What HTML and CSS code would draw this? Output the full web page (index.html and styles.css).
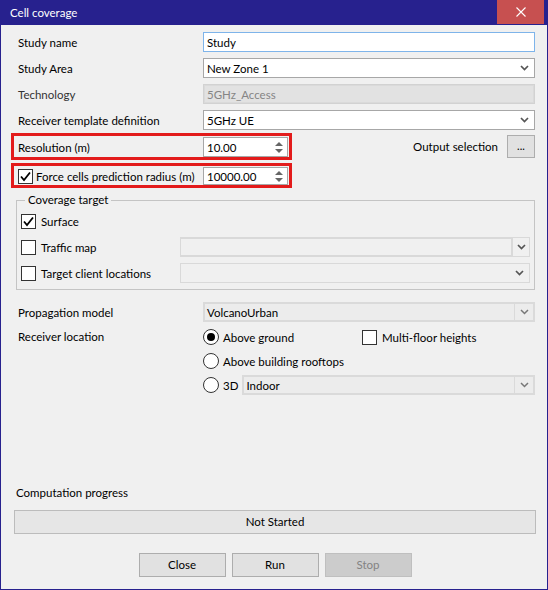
FILE: index.html
```html
<!DOCTYPE html>
<html lang="en">
    <head>
        <meta charset="UTF-8">
        <meta name="viewport" content="width=device-width, initial-scale=1.0">
        <title>Cell coverage</title>

        <link rel="stylesheet" href="styles.css">
    </head>
    <body>
        <div class="window">

            <div class="titlebar">
                <span class="title">Cell coverage</span>
                <span class="close-btn">
                    <svg width="10" height="10" viewBox="0 0 10 10"><path d="M0.5 0.5L9.5 9.5M9.5 0.5L0.5 9.5" stroke="#fff" stroke-width="1.1"/></svg>
                </span>
            </div>

            <div class="client">

                <div class="row">
                    <span class="lbl">Study name</span>
                    <div class="field focus">Study</div>
                </div>

                <div class="row">
                    <span class="lbl">Study Area</span>
                    <div class="field">
                        <span class="val">New Zone 1</span>
                        <svg class="chev" width="9" height="6" viewBox="0 0 9 6"><path d="M1 1l3.5 3.5L8 1" fill="none" stroke="#555" stroke-width="1.7"/></svg>
                    </div>
                </div>

                <div class="row">
                    <span class="lbl lbl-dim">Technology</span>
                    <div class="field disabled">5GHz_Access</div>
                </div>

                <div class="row">
                    <span class="lbl">Receiver template definition</span>
                    <div class="field">
                        <span class="val">5GHz UE</span>
                        <svg class="chev" width="9" height="6" viewBox="0 0 9 6"><path d="M1 1l3.5 3.5L8 1" fill="none" stroke="#555" stroke-width="1.7"/></svg>
                    </div>
                </div>

                <!-- linhas destacadas em vermelho -->
                <div class="hl-row">
                    <div class="redbox">
                        <span class="lbl">Resolution (m)</span>
                        <div class="spin">
                            <span class="val">10.00</span>
                            <svg class="arrows" width="8" height="13" viewBox="0 0 8 13"><path d="M0 5L4 1L8 5Z M0 8L4 12L8 8Z" fill="#666"/></svg>
                        </div>
                    </div>
                    <span class="out-lbl">Output selection</span>
                    <span class="dots-btn">...</span>
                </div>

                <div class="hl-row second">
                    <div class="redbox">
                        <span class="lbl chk-lbl">
                            <span class="chk">
                                <svg width="13" height="13" viewBox="0 0 13 13"><path d="M2 6.5L5 10L11 2.5" fill="none" stroke="#000" stroke-width="1.8"/></svg>
                            </span>
                            Force cells prediction radius (m)
                        </span>
                        <div class="spin short">
                            <span class="val">10000.00</span>
                            <svg class="arrows" width="8" height="13" viewBox="0 0 8 13"><path d="M0 5L4 1L8 5Z M0 8L4 12L8 8Z" fill="#666"/></svg>
                        </div>
                    </div>
                </div>

                <fieldset class="group">
                    <legend>Coverage target</legend>

                    <div class="grow">
                        <span class="chk">
                            <svg width="13" height="13" viewBox="0 0 13 13"><path d="M2 6.5L5 10L11 2.5" fill="none" stroke="#000" stroke-width="1.8"/></svg>
                        </span>
                        <span>Surface</span>
                    </div>

                    <div class="grow">
                        <span class="chk"></span>
                        <span class="grow-lbl">Traffic map</span>
                        <div class="combo-split">
                            <div class="cs-text"></div>
                            <div class="cs-btn">
                                <svg width="9" height="6" viewBox="0 0 9 6"><path d="M1 1l3.5 3.5L8 1" fill="none" stroke="#555" stroke-width="1.7"/></svg>
                            </div>
                        </div>
                    </div>

                    <div class="grow last">
                        <span class="chk"></span>
                        <span class="grow-lbl">Target client locations</span>
                        <div class="combo-off">
                            <svg class="chev" width="9" height="6" viewBox="0 0 9 6"><path d="M1 1l3.5 3.5L8 1" fill="none" stroke="#555" stroke-width="1.7"/></svg>
                        </div>
                    </div>
                </fieldset>

                <div class="row prop">
                    <span class="lbl">Propagation model</span>
                    <div class="field flat">
                        <span class="val">VolcanoUrban</span>
                        <span class="sep"></span>
                        <svg class="chev" width="9" height="6" viewBox="0 0 9 6"><path d="M1 1l3.5 3.5L8 1" fill="none" stroke="#777" stroke-width="1.5"/></svg>
                    </div>
                </div>

                <div class="receiver">
                    <span class="lbl rec-lbl">Receiver location</span>
                    <div class="radios">
                        <div class="rrow">
                            <span class="opt">
                                <span class="radio on"></span>
                                Above ground
                            </span>
                            <span class="chk"></span>
                            <span class="mf-lbl">Multi-floor heights</span>
                        </div>
                        <div class="rrow">
                            <span class="radio"></span>
                            Above building rooftops
                        </div>
                        <div class="rrow">
                            <span class="radio"></span>
                            <span class="d3">3D</span>
                            <div class="field flat">
                                <span class="val">Indoor</span>
                                <span class="sep"></span>
                                <svg class="chev" width="9" height="6" viewBox="0 0 9 6"><path d="M1 1l3.5 3.5L8 1" fill="none" stroke="#777" stroke-width="1.5"/></svg>
                            </div>
                        </div>
                    </div>
                </div>

                <div class="spacer"></div>

                <div class="progress-lbl">Computation progress</div>
                <div class="progress">Not Started</div>

                <div class="buttons">
                    <span class="btn">Close</span>
                    <span class="btn">Run</span>
                    <span class="btn off">Stop</span>
                </div>

            </div>
        </div>
    </body>
</html>
```

FILE: styles.css
```css
*{
    box-sizing: border-box;
}

body{
    margin: 0;
    font-family: Lato, "Liberation Sans", sans-serif;
    font-size: 11.5px;
    color: #000;
}

.window{
    width: 548px;
    height: 590px;
    background-color: #f0f0f0;
    display: flex;
    flex-direction: column;
}

.titlebar{
    height: 25px;
    background-color: #27218e;
    color: #fff;
    display: flex;
    align-items: flex-start;
    padding-left: 10px;
}
.title{
    flex: 1;
    line-height: 25px;
}
.close-btn{
    width: 47px;
    height: 24px;
    margin-right: 4px;
    background-color: #c75050;
    display: flex;
    align-items: center;
    justify-content: center;
}

.client{
    flex: 1;
    border: 1px solid #27218e;
    border-top: 0;
    display: flex;
    flex-direction: column;
    padding: 7px 11px 12px 13px;
}

.row{
    display: flex;
    align-items: center;
    height: 20px;
    padding: 0 1px 0 4px;
    margin-bottom: 6px;
}
.lbl{
    width: 185px;
    flex-shrink: 0;
}
.lbl-dim{
    color: #333;
}

.field{
    flex: 1;
    height: 20px;
    border: 1px solid #a7a7a7;
    background-color: #fff;
    display: flex;
    align-items: center;
    padding: 0 5px 0 3px;
}
.field .val{
    flex: 1;
}
.field.focus{
    border-color: #7eb4ea;
}
.field.disabled{
    background-color: #e2e2e2;
    border: 1px solid #d2d2d2;
    box-shadow: inset 0 0 0 1px #dadada;
    color: #858585;
}
.field.flat{
    background-color: #ececec;
    border: 2px solid #dadada;
    padding-left: 2px;
    padding-right: 4px;
}
.sep{
    width: 1px;
    height: 16px;
    background-color: #dadada;
    margin-right: 5px;
}

/* linhas com caixa vermelha */
.hl-row{
    display: flex;
    align-items: center;
    margin-left: -3px;
    margin-top: -3px;
}
.hl-row.second{
    margin-top: 3px;
}
.redbox{
    display: flex;
    align-items: center;
    border: 3px solid #e31b1b;
    padding: 1px 1px 0 4px;
}
.spin{
    width: 85px;
    height: 20px;
    border: 1px solid #a7a7a7;
    background-color: #fff;
    display: flex;
    align-items: center;
    padding: 0 4px 0 3px;
}
.spin.short{
    height: 18px;
}
.spin .val{
    flex: 1;
}
.chk-lbl{
    display: flex;
    align-items: center;
}
.chk-lbl .chk{
    margin-right: 3px;
}
.out-lbl{
    margin-left: auto;
    margin-right: 9px;
}
.dots-btn{
    width: 28px;
    height: 23px;
    margin-right: 1px;
    border: 1px solid #adadad;
    background-color: #e1e1e1;
    text-align: center;
    line-height: 20px;
    font-size: 11px;
}

.chk{
    width: 15px;
    height: 15px;
    border: 1px solid #333;
    background-color: #fff;
    display: inline-flex;
    align-items: center;
    justify-content: center;
    flex-shrink: 0;
}

.group{
    margin: 4px 1px 0 2px;
    border: 1px solid #c4c4c4;
    padding: 3px 4px 6px 4px;
    min-width: 0;
}
.group legend{
    line-height: 16px;
    padding: 0 3px;
    margin-left: 4px;
}
.grow{
    display: flex;
    align-items: center;
    height: 20px;
    margin-bottom: 6px;
}
.grow.last{
    margin-top: 1px;
    margin-bottom: 0;
}
.grow .chk{
    margin-right: 5px;
}
.grow-lbl{
    width: 139px;
}
.combo-split{
    flex: 1;
    height: 20px;
    display: flex;
}
.cs-text{
    flex: 1;
    border: 1px solid #d9d9d9;
    border-width: 2px 1px;
}
.cs-btn{
    width: 18px;
    border: 1px solid #d9d9d9;
    display: flex;
    align-items: center;
    justify-content: center;
}
.combo-off{
    flex: 1;
    height: 20px;
    border: 1px solid #d9d9d9;
    display: flex;
    align-items: center;
    justify-content: flex-end;
    padding-right: 5px;
}

.row.prop{
    margin-top: 12px;
    margin-bottom: 0;
}

.receiver{
    display: flex;
    margin-top: 5px;
    padding: 0 1px 0 4px;
}
.rec-lbl{
    line-height: 20px;
}
.radios{
    flex: 1;
    display: flex;
    flex-direction: column;
    gap: 4px;
}
.rrow{
    display: flex;
    align-items: center;
    height: 20px;
}
.opt{
    width: 159px;
    display: flex;
    align-items: center;
}
.radio{
    width: 16px;
    height: 16px;
    border: 1px solid #333;
    border-radius: 50%;
    background-color: #fff;
    margin-right: 4px;
    display: inline-flex;
    align-items: center;
    justify-content: center;
    flex-shrink: 0;
}
.radio.on::after{
    content: "";
    width: 8px;
    height: 8px;
    border-radius: 50%;
    background-color: #000;
}
.mf-lbl{
    margin-left: 5px;
}
.d3{
    margin-right: 4px;
}
.rrow .field{
    height: 20px;
}

.spacer{
    flex: 1;
}

.progress-lbl{
    margin-left: 2px;
    line-height: 16px;
}
.progress{
    margin-top: 9px;
    height: 24px;
    border: 1px solid #bcbcbc;
    background-color: #e6e6e6;
    text-align: center;
    line-height: 22px;
}

.buttons{
    display: flex;
    justify-content: center;
    gap: 6px;
    margin-top: 19px;
}
.btn{
    width: 87px;
    height: 24px;
    border: 1px solid #adadad;
    background-color: #e1e1e1;
    text-align: center;
    line-height: 22px;
}
.btn.off{
    background-color: #cccccc;
    border-color: #bfbfbf;
    color: #838383;
}
```
